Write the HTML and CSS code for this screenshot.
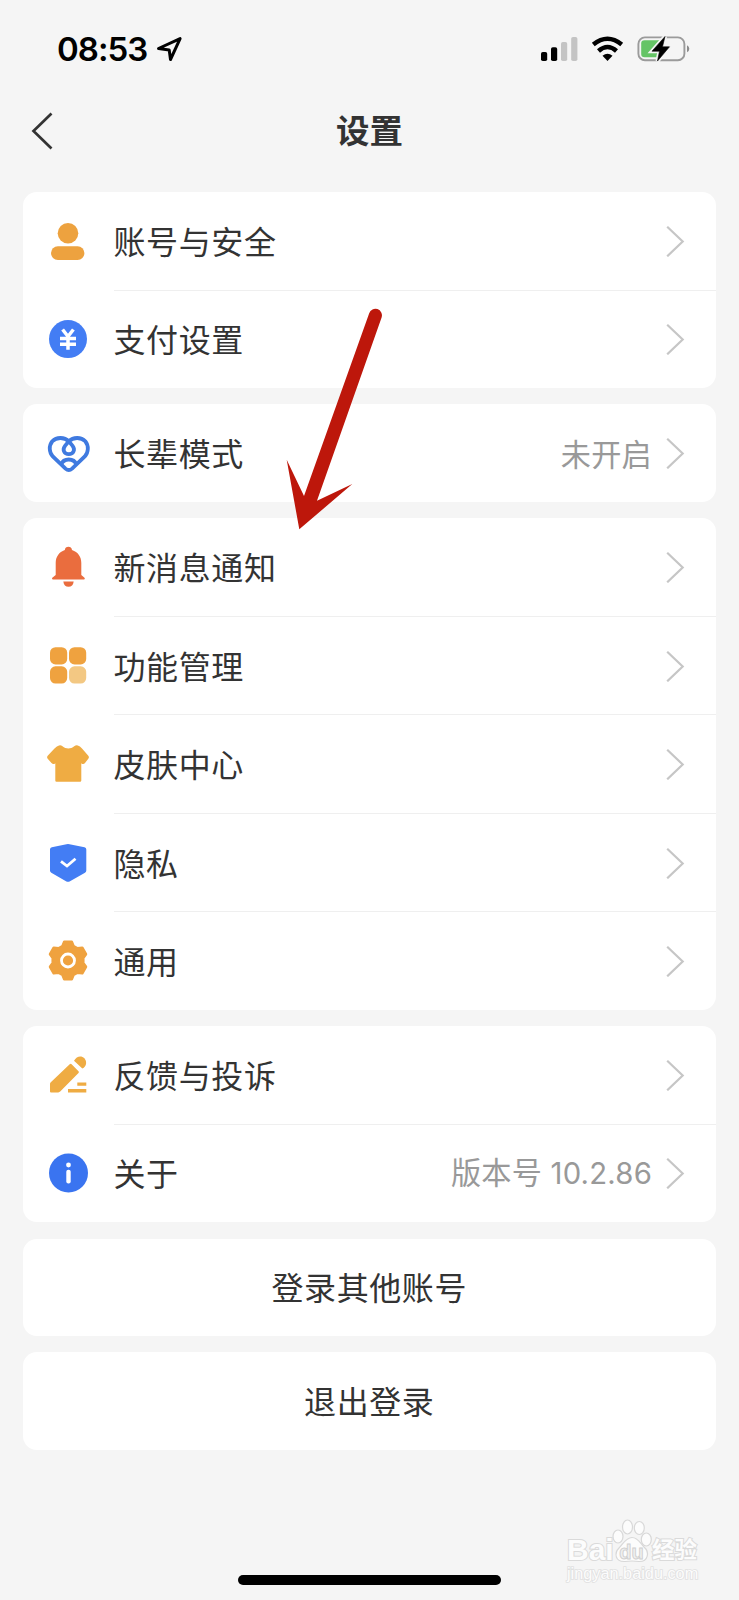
FILE: index.html
```html
<!DOCTYPE html>
<html lang="zh-CN">
<head>
<meta charset="utf-8">
<title>设置</title>
<link rel="stylesheet" href="styles.css">
</head>
<body>
<svg class="defs" width="0" height="0" aria-hidden="true">
  <symbol id="chevron" viewBox="0 0 20 32"><path d="M2.200 1.700L17.700 16.500L2.200 31.300" fill="none" stroke="#c6c6c6" stroke-width="2.200"/></symbol>
</svg>
<div class="screen">
  <header class="status">
    <div class="status-left">
      <span class="time">08:53</span>
      <svg class="location" viewBox="0 0 28 28"><path d="M2.500 12.500L24.100 2.600L14.500 23.500L13.200 13.900Z" fill="none" stroke="#000" stroke-width="3" stroke-linejoin="round"/></svg>
    </div>
    <svg class="status-icons" viewBox="0 0 150 26">
      <rect x="0" y="16" width="6.200" height="9" rx="1.800"/>
      <rect x="10" y="11.300" width="6.200" height="13.700" rx="1.800"/>
      <g fill="#c4c4c4"><rect x="20" y="6" width="6.200" height="19" rx="1.800"/><rect x="30.200" y="1" width="6.200" height="24" rx="1.800"/></g>
      <g fill="none" stroke="#000" stroke-width="4.500"><path d="M52.300 8.500Q66.500 -3 80.700 8.500"/><path d="M57.500 15Q66.500 7 75.500 15"/></g>
      <path d="M61.500 19.800Q66.500 15.800 71.500 19.800L66.500 25Z"/>
      <rect x="97.400" y="1.400" width="46" height="22.800" rx="6.500" fill="none" stroke="#9b9b9b" stroke-width="1.900"/>
      <path d="M146 9.200Q148.300 10.200 148.300 12.700T146 16.200Z" fill="#8b8b8b"/>
      <path d="M103.500 4.200H118V21.200H103.500Q100.200 21.200 100.200 18V7.400Q100.200 4.200 103.500 4.200Z" fill="#65c466"/>
      <path d="M124 .5L111 15.200H118.500L116.500 25L128.500 10.800H121.500Z" stroke="#f5f5f5" stroke-width="4"/>
      <path d="M124 .5L111 15.200H118.500L116.500 25L128.500 10.800H121.500Z" stroke="#000" stroke-width=".6"/>
    </svg>
  </header>
  <nav class="navbar">
    <svg class="back" viewBox="0 0 22 38"><path d="M20.500 1.500L2.500 19L20.500 36.500" fill="none" stroke="#333" stroke-width="2.700"/></svg>
    <h1 class="title">设置</h1>
  </nav>
  <main class="cards">
    <section class="card">
      <div class="row">
        <svg class="icon" viewBox="0 0 48 48" fill="#eda23f"><circle cx="24" cy="16.300" r="10.300"/><rect x="7" y="29.200" width="33.400" height="13.700" rx="6.850"/></svg>
        <span class="label">账号与安全</span><svg class="chev"><use href="#chevron"/></svg>
      </div>
      <div class="row">
        <svg class="icon" viewBox="0 0 48 48"><circle cx="24" cy="24.100" r="19" fill="#437df4"/><path d="M18.600 14.500L24 21.500L29.400 14.500M16 23.500H32M16 29.300H32M24 21V34.800" fill="none" stroke="#fff" stroke-width="3.500"/></svg>
        <span class="label">支付设置</span><svg class="chev"><use href="#chevron"/></svg>
      </div>
    </section>
    <section class="card">
      <div class="row">
        <svg class="icon" viewBox="0 0 48 48" fill="none" stroke="#3f7ae0" stroke-width="3.800"><path d="M24.800 12.300C20.500 8 12.500 7.800 8.300 12.300C4.700 16.800 5 23.300 8.800 27.500L21.500 39.600Q24.800 42.400 28.100 39.600L40.800 27.500C44.600 23.300 44.900 16.800 41.300 12.300C37.100 7.800 29.100 8 24.800 12.300L21 16.900C18 20.800 20.300 25.200 24.800 25.200S31.600 20.800 28.600 16.900Z"/><path d="M17.300 35.500C19.500 28.800 30 28.800 32.300 35.500"/></svg>
        <span class="label">长辈模式</span><span class="value">未开启</span><svg class="chev"><use href="#chevron"/></svg>
      </div>
    </section>
    <section class="card">
      <div class="row">
        <svg class="icon" viewBox="0 0 48 48" fill="#ea6d3e"><path d="M24.400 3.700Q27.500 3.700 28 6.900C34 9 37.300 13.500 37.300 20V32L40.500 34.800Q41.500 36.400 40 36.400H9Q7.300 36.400 8.300 34.800L11.700 32V20C11.700 13.500 15 9 20.800 6.900Q21.300 3.700 24.400 3.700Z"/><path d="M19.300 38.400H29.700Q29 43.700 24.500 43.700T19.300 38.400Z"/></svg>
        <span class="label">新消息通知</span><svg class="chev"><use href="#chevron"/></svg>
      </div>
      <div class="row">
        <svg class="icon" viewBox="0 0 48 48" fill="#efa23f"><rect x="6" y="5.200" width="17.200" height="17.200" rx="5.500"/><rect x="25" y="5.200" width="17.200" height="17.200" rx="5.500"/><rect x="6" y="24.300" width="17.200" height="17.200" rx="5.500"/><rect x="25" y="24.300" width="17.200" height="17.200" rx="5.500" fill="#f3c883"/></svg>
        <span class="label">功能管理</span><svg class="chev"><use href="#chevron"/></svg>
      </div>
      <div class="row">
        <svg class="icon" viewBox="0 0 48 48" fill="#efac43"><path d="M15 5.500Q16.800 5 18.500 6.200C22 9.200 26.700 9.200 30.200 6.200Q32 5 33.800 5.500Q36 6 38 8.500L44.300 15.800Q45.500 17.300 44.300 18.800L41 23Q39.500 25 37.300 23.200V40.500Q37.300 41.700 36.100 41.700H12.500Q11.300 41.700 11.300 40.500V23.200Q9.300 25 7.500 23L3.700 18.800Q2.500 17.300 3.700 15.800L10.500 8.500Q13 6 15 5.500Z"/></svg>
        <span class="label">皮肤中心</span><svg class="chev"><use href="#chevron"/></svg>
      </div>
      <div class="row">
        <svg class="icon" viewBox="0 0 48 48"><path d="M25.500 5.200L40.500 8.200Q42.300 8.700 42.300 10.500V31.500Q42.300 33 41 33.800L26 42.200Q24 43.300 22 42.200L7.300 33.800Q6 33 6 31.500V10.500Q6 8.700 7.800 8.200L22.500 5.200Q24 4.800 25.500 5.200Z" fill="#437df4"/><path d="M17 22.300L23 27L31.500 19.700" fill="none" stroke="#fff" stroke-width="2.800"/></svg>
        <span class="label">隐私</span><svg class="chev"><use href="#chevron"/></svg>
      </div>
      <div class="row">
        <svg class="icon" viewBox="0 0 48 48"><path transform="translate(24 23.500)" fill="#efa23f" stroke="#efa23f" stroke-width="2.500" stroke-linejoin="round" d="M-3.800 -18.700H3.800L5.500 -14.500L9.500 -12.200L14.300 -12.800L18 -6.300L15.300 -2.500V2.500L18 6.300L14.300 12.800L9.500 12.200L5.500 14.500L3.800 18.700H-3.800L-5.500 14.500L-9.500 12.200L-14.300 12.800L-18 6.300L-15.300 2.500V-2.500L-18 -6.300L-14.300 -12.800L-9.500 -12.200L-5.500 -14.500Z"/><circle cx="24" cy="23.500" r="6.500" fill="none" stroke="#fff" stroke-width="2.800"/></svg>
        <span class="label">通用</span><svg class="chev"><use href="#chevron"/></svg>
      </div>
    </section>
    <section class="card">
      <div class="row">
        <svg class="icon" viewBox="0 0 48 48" fill="#efac43"><path d="M6 40.500V33Q6 32 6.800 31.200L25.700 13.300Q26.700 12.400 27.600 13.300L34.500 20.200Q35.400 21 34.500 22L16.200 40.600Q15.400 41.400 14.300 41.400H7Q6 41.400 6 40.500Z"/><path d="M30 9.800C32.500 5 37.500 4.400 40.300 7.200S42.800 15.500 38.300 17.600Z"/><path d="M33.300 31.400H42.300V34.800H33.300ZM24 38H42.300V41.400H24Z"/></svg>
        <span class="label">反馈与投诉</span><svg class="chev"><use href="#chevron"/></svg>
      </div>
      <div class="row">
        <svg class="icon" viewBox="0 0 48 48"><circle cx="24.500" cy="24" r="19.500" fill="#3a74f0"/><circle cx="24.500" cy="16" r="2.400" fill="#fff"/><rect x="22.300" y="20.800" width="4.400" height="13.800" rx="2" fill="#fff"/></svg>
        <span class="label">关于</span><span class="value">版本号 <span class="num">10.2.86</span></span><svg class="chev"><use href="#chevron"/></svg>
      </div>
    </section>
    <button class="card action">登录其他账号</button>
    <button class="card action">退出登录</button>
  </main>
  <svg class="arrow" viewBox="0 0 70 226"><path d="M84.200 9.200A6.500 6.500 0 0 1 96.600 13.400L32 196.700L67.300 180L14.300 225.300L1.700 155.700L19 192Z" fill="#bd170b"/></svg>
  <div class="watermark">
    <div class="brand"><span class="bai">Bai</span>
      <svg class="paw" viewBox="0 0 40 44"><g fill="#fcfcfc" stroke="#d8d8d8" stroke-width="1.200"><ellipse cx="6" cy="17.500" rx="5" ry="6.500"/><ellipse cx="15.500" cy="8" rx="5" ry="7"/><ellipse cx="27.300" cy="9" rx="5" ry="6.500"/><ellipse cx="34.300" cy="20.500" rx="5" ry="6.500"/><path d="M20 18.500C26 18.500 28 24 32 28C38 33 36 43 27 42.500Q20 41.500 13 42.500C3 43 2 34 7 29C11 25 14 18.500 20 18.500Z"/></g><text x="19.500" y="39.500" class="du">du</text></svg>
      <span class="jingyan">经验</span></div>
    <div class="site">jingyan.baidu.com</div>
  </div>
  <div class="home"></div>
</div>
</body>
</html>
```
FILE: styles.css
```css
* { box-sizing: border-box; }
body { margin: 0; background: #f5f5f5; }
.defs { position: absolute; }
.screen {
  position: relative;
  width: 739px;
  height: 1600px;
  overflow: hidden;
  background: #f5f5f5;
  color: #333;
  font-family: "Noto Sans CJK SC", sans-serif;
}
.status {
  height: 98px;
  padding: 0 48px 0 57px;
  display: flex;
  align-items: center;
  justify-content: space-between;
}
.status-left { display: flex; align-items: center; gap: 8px; }
.time {
  width: 91px;
  font: 600 33px/40px Inter, sans-serif;
  letter-spacing: -1px;
  color: #000;
  white-space: nowrap;
}
.location { width: 28px; height: 28px; margin-top: 2px; }
.status-icons { width: 150px; height: 26px; }
.navbar {
  height: 66px;
  padding: 0 31px;
  display: grid;
  grid-template-columns: 22px 1fr 22px;
  align-items: center;
}
.back { width: 22px; height: 38px; }
.title { margin: -4px 0 0; text-align: center; font-size: 33.500px; line-height: 48px; font-weight: 700; }
.cards {
  padding: 28px 22.500px 0;
  display: flex;
  flex-direction: column;
  gap: 16.400px;
}
.card { width: 693.500px; background: #fff; border-radius: 14px; }
.row {
  position: relative;
  height: 97.500px;
  padding: 0 31px 0 21.500px;
  display: flex;
  align-items: center;
}
.row + .row { margin-top: 1px; }
.row + .row::before {
  content: "";
  position: absolute;
  left: 91px;
  right: 0;
  top: -1px;
  height: 1px;
  background: #efefef;
}
.icon { width: 48px; height: 48px; flex: none; }
.label { flex: 1; margin: -2px 0 0 21.500px; font-size: 32px; letter-spacing: 0.600px; line-height: 48px; }
.value { margin: -1px 13px 0 0; font-size: 30.200px; letter-spacing: 0.200px; line-height: 44px; color: #999; }
.num { margin-left: 1.500px; font-family: Inter, sans-serif; font-size: 29.300px; }
.chev { width: 20px; height: 32px; flex: none; }
.action {
  height: 97.500px;
  padding: 0 0 2px;
  border: 0;
  color: #333;
  font-family: inherit;
  font-size: 32px;
  letter-spacing: 0.600px;
}
.arrow {
  position: absolute;
  left: 285px;
  top: 304px;
  width: 70px;
  height: 226px;
  overflow: visible;
}
.watermark { position: absolute; left: 567px; top: 1519px; width: 135px; color: #fcfcfc; }
.brand { height: 44px; display: flex; align-items: flex-end; -webkit-text-stroke: 2px #dadada; paint-order: stroke fill; }
.bai { font: 700 30px/26px "Liberation Sans", sans-serif; width: 45px; }
.paw { width: 40px; height: 44px; flex: none; -webkit-text-stroke: 0; paint-order: normal; }
.du { font: 700 20px "Liberation Sans", sans-serif; text-anchor: middle; fill: #f0f0f0; stroke: #cfcfcf; stroke-width: 0.900px; }
.jingyan { font-size: 22.500px; line-height: 30px; font-weight: 700; white-space: nowrap; }
.site { font: 16.300px/20px "Liberation Sans", sans-serif; -webkit-text-stroke: 1.600px #e0e0e0; paint-order: stroke fill; white-space: nowrap; }
.home {
  position: absolute;
  left: 238px;
  top: 1575px;
  width: 263px;
  height: 10px;
  border-radius: 5px;
  background: #000;
}
```
